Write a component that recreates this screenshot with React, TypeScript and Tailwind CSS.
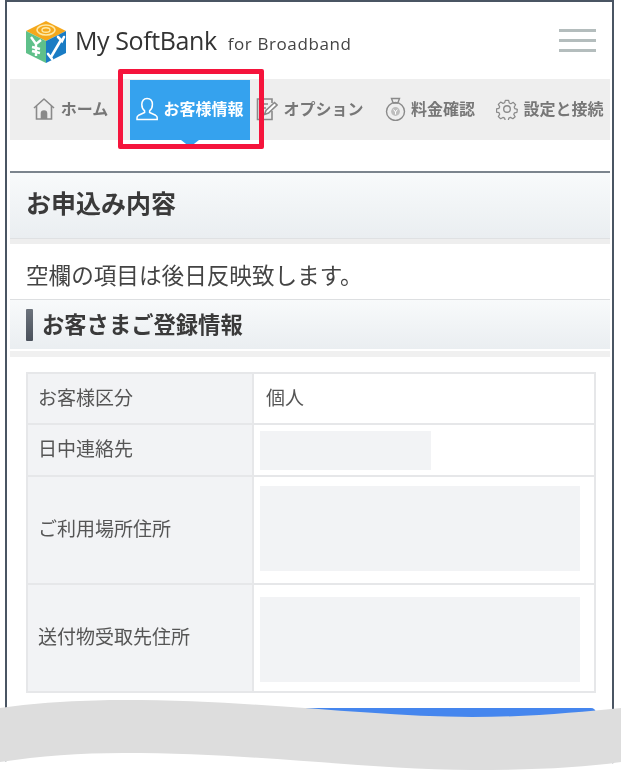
import React from "react";

const jp = "font-['Noto_Sans_CJK_JP','Noto_Sans',sans-serif]";

function Cube() {
  return (
    <svg width="44" height="44" viewBox="0 0 44 44" className="shrink-0">
      <path d="M22 1 L42 11 L22 21 L2 11 Z" fill="#f5a81c" />
      <ellipse cx="22" cy="10" rx="9" ry="5" fill="none" stroke="#fde9a8" strokeWidth="1.6" />
      <ellipse cx="22" cy="10" rx="4" ry="2.2" fill="none" stroke="#fde9a8" strokeWidth="1.4" />
      <path d="M2 11 L22 21 L22 43 L2 33 Z" fill="#5fc08a" />
      <path d="M22 21 L42 11 L42 33 L22 43 Z" fill="#1a7cc4" />
      <path d="M7 17 L12 24 L17 20 M12 24 V36 M8 27 L16 29 M8 31 L16 33" fill="none" stroke="#fff" strokeWidth="2.4" />
      <path d="M27 37 L37 20 M34 17 L38 21 L40 17 M24 34 L28 39" fill="none" stroke="#fff" strokeWidth="2.6" strokeLinecap="round" />
    </svg>
  );
}

function HomeIcon() {
  return (
    <svg width="24" height="24" viewBox="0 0 24 24" fill="none" stroke="#8a8a8a" strokeWidth="1.6">
      <path d="M2 11 L12 2 L22 11" strokeLinejoin="round" />
      <path d="M4.5 9 V22 H19.5 V9" />
      <path d="M9.5 22 V16.5 a2.5 2.5 0 0 1 5 0 V22" fill="#8a8a8a" />
    </svg>
  );
}

function UserIcon() {
  return (
    <svg width="22" height="24" viewBox="0 0 22 24" fill="none" stroke="#fff" strokeWidth="1.5">
      <path d="M11 1.5 c3.6 0 5.4 2.6 5.4 6 c0 3-1.4 5.2-2.8 6.4 v1.6 l6 2.8 c1 .5 1.6 1.4 1.6 2.4 v1.8 H1 v-1.8 c0-1 .6-1.9 1.6-2.4 l6-2.8 v-1.6 c-1.4-1.2-2.8-3.4-2.8-6.4 c0-3.4 1.8-6 5.2-6 Z" />
    </svg>
  );
}

function EditIcon() {
  return (
    <svg width="22" height="24" viewBox="0 0 22 24" fill="none" stroke="#8a8a8a" strokeWidth="1.6">
      <path d="M16 14 V22.5 H1.5 V2 H16 V6" />
      <path d="M5 7 H12 M5 11 H10 M5 15 H8" />
      <path d="M8.5 17.5 L10 13.5 L18.5 5.5 L21 8 L12.5 16 Z" fill="#fff" />
    </svg>
  );
}

function MoneyIcon() {
  return (
    <svg width="21" height="24" viewBox="0 0 21 24" fill="none" stroke="#8a8a8a" strokeWidth="1.4">
      <path d="M6.5 1.5 H14.5 L12.8 6 H8.2 Z" />
      <circle cx="10.5" cy="14.5" r="9" />
      <circle cx="10.5" cy="14.5" r="4.4" fill="#bdbdbd" stroke="none" />
      <path d="M8.6 12.5 L10.5 15 L12.4 12.5 M10.5 15 V17.5" stroke="#fff" strokeWidth="1" />
    </svg>
  );
}

function GearIcon() {
  return (
    <svg width="22" height="22" viewBox="0 0 24 24" fill="none" stroke="#8a8a8a" strokeWidth="1.5" strokeLinejoin="round">
      <path d="M10 1.5 h4 l.7 3.2 2 .9 2.9-1.7 2.8 2.9-1.7 2.8 .8 2 3 .8 v0 l-.4 3.6-3 .6-.9 2 1.7 2.8-2.8 2.4-2.9-1.6-2 .9-.7 2.9 h-3.6 l-.8-2.9-2-.9-2.8 1.6-2.8-2.6 1.6-2.8-.8-2-3-.7 v-3.8 l3-.7 .8-2-1.6-2.8 2.8-2.8 2.8 1.6 2-.8 Z" transform="translate(1.2 1.2) scale(.9)" />
      <circle cx="12" cy="12" r="3.6" />
    </svg>
  );
}

function NavItem({ icon, label, active }: { icon: React.ReactNode; label: string; active?: boolean }) {
  return (
    <div
      className={
        active
          ? "relative flex items-center justify-center gap-[5px] bg-[#35a2ee] pb-[3px]"
          : "flex items-center justify-center gap-[5px] pb-[3px]"
      }
    >
      {icon}
      <span
        className={
          active
            ? "text-[16px] font-bold text-white whitespace-nowrap mb-[2px]"
            : "text-[16px] font-bold text-[#777] whitespace-nowrap mb-[2px]"
        }
      >
        {label}
      </span>
      {active && (
        <span className="absolute left-1/2 top-full -ml-[9px] border-x-[9px] border-t-[7px] border-x-transparent border-t-[#35a2ee]" />
      )}
    </div>
  );
}

function Row({ label, h, children, cell }: { label: string; h: string; children: React.ReactNode; cell?: string }) {
  return (
    <div className={`flex border-b-2 border-[#e6e7e9] last:border-b-0 ${h}`}>
      <div className="w-[226px] shrink-0 flex items-center pl-[10px] pb-[3px] bg-[#f2f3f5] border-r-2 border-[#e6e7e9] text-[#555] text-[19px]">
        {label}
      </div>
      <div className={`flex-1 flex items-center pl-[6px] pr-[14px] text-[#555] text-[19px] ${cell ?? ""}`}>{children}</div>
    </div>
  );
}

export default function App() {
  return (
    <div className={`relative w-[621px] h-[771px] overflow-hidden bg-white ${jp}`}>
      <div className="ml-[5px] w-[609px] h-[771px] border-x-2 border-t-2 border-[#4a5563] pl-[3px] pr-[2px] blur-[0.4px]">
        <header className="h-[77px] flex items-center justify-between pl-[14px] pr-[14px]">
          <div className="flex items-center gap-[7px] pt-[2px]">
            <Cube />
            <span className="font-['Open_Sans',sans-serif] text-[25px] text-[#333] tracking-[-0.4px] whitespace-nowrap mb-[2px]">My SoftBank</span>
            <span className="font-['Open_Sans',sans-serif] text-[17px] text-[#444] ml-[4px] mt-[4px] tracking-[0.6px] whitespace-nowrap">for Broadband</span>
          </div>
          <div className="flex flex-col gap-[7px] w-[37px]">
            <span className="h-[3px] bg-[#b4bdbd]" />
            <span className="h-[3px] bg-[#b4bdbd]" />
            <span className="h-[3px] bg-[#b4bdbd]" />
          </div>
        </header>

        <nav className="grid grid-cols-5 h-[61px] bg-[#eeeeee] pt-px">
          <NavItem icon={<HomeIcon />} label="ホーム" />
          <NavItem icon={<UserIcon />} label="お客様情報" active />
          <NavItem icon={<EditIcon />} label="オプション" />
          <NavItem icon={<MoneyIcon />} label="料金確認" />
          <NavItem icon={<GearIcon />} label="設定と接続" />
        </nav>

        <section className="mt-[31px]">
          <h1 className="h-[68px] flex items-center pl-[16px] pb-[5px] border-t-[2px] border-b border-t-[#7b848d] border-b-[#dfe1e3] bg-gradient-to-b from-[#f8fafb] to-[#eaeef1] text-[25px] font-bold text-[#3a3a3a]">
            お申込み内容
          </h1>
          <div className="h-[5px] bg-[#eeeeee]" />
          <p className="h-[55px] flex items-center pl-[16px] pt-[6px] text-[22.6px] text-[#444]">空欄の項目は後日反映致します。</p>
          <h2 className="h-[50px] flex items-center pl-[16px] border-t border-[#dddfe1] bg-gradient-to-b from-[#f8fafb] to-[#eaeef1] text-[22.3px] font-bold text-[#3a3a3a]">
            <span className="w-[7px] h-[32px] mr-[9px] rounded-[1px] bg-gradient-to-b from-[#6c737c] to-[#4a515b]" />
            <span className="mb-[2px]">お客さまご登録情報</span>
          </h2>
          <div className="h-[2px] bg-white" />
          <div className="h-[6px] bg-[#f0f0f0]" />
        </section>

        <div className="ml-[16px] mr-[14px] mt-[15px] border-2 border-[#e6e7e9]">
          <Row label="お客様区分" h="h-[51px]" cell="pb-[3px]">
            <span className="pl-[6px]">個人</span>
          </Row>
          <Row label="日中連絡先" h="h-[52px]">
            <div className="w-[171px] h-[39px] bg-[#f2f3f5]" />
          </Row>
          <Row label="ご利用場所住所" h="h-[108px]" cell="pb-[4px]">
            <div className="w-full h-[85px] bg-[#f2f3f5]" />
          </Row>
          <Row label="送付物受取先住所" h="h-[106px]" cell="pt-[3px]">
            <div className="w-full h-[85px] bg-[#f2f3f5]" />
          </Row>
        </div>

        <div className="ml-[16px] mr-[14px] mt-[15px] h-[30px] rounded-[5px] bg-[#4586ee]" />
      </div>

      <svg className="absolute left-0 top-0" width="621" height="771" viewBox="0 0 621 771">
        <path d="M0 762 C40 756 80 753 123 753 C260 753 370 770 472 770 C530 770 580 768 621 762 V771 H0 Z" fill="#fff" />
        <path d="M0 708 C40 702 90 700 123 700 C260 700 370 717 472 717 C530 717 580 712 621 708 V762 C580 768 530 770 472 770 C370 770 260 753 123 753 C80 753 40 756 0 762 Z" fill="#dddddd" />
      </svg>

      <div className="absolute left-[118px] top-[69px] w-[146px] h-[80px] border-[5px] border-[#f5143c] rounded-[2px]" />
    </div>
  );
}
